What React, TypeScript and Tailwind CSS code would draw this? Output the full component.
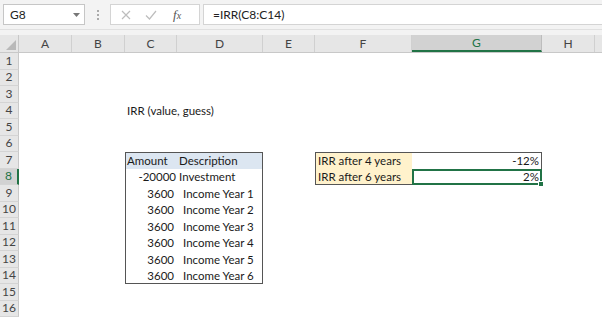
import React from 'react'

type Col = { key: string; w: string }

const cols: Col[] = [
  { key: 'A', w: 'w-[53px]' },
  { key: 'B', w: 'w-[53px]' },
  { key: 'C', w: 'w-[52px]' },
  { key: 'D', w: 'w-[86px]' },
  { key: 'E', w: 'w-[52px]' },
  { key: 'F', w: 'w-[97px]' },
  { key: 'G', w: 'w-[130px]' },
  { key: 'H', w: 'w-[53px]' },
  { key: '', w: 'flex-1' },
]

const rows = Array.from({ length: 16 }, (_, i) => i + 1)

type Cell = { text?: string; cls?: string; selected?: boolean }

// cell contents and borders, keyed by "C7" style refs
const cells: Record<string, Cell> = {
  C4: { text: 'IRR (value, guess)', cls: 'pl-[2px] whitespace-nowrap overflow-visible' },
  C7: { text: 'Amount', cls: 'bg-[#dce6f1] border-l border-t border-[#555] pl-[1px]' },
  D7: { text: 'Description', cls: 'bg-[#dce6f1] border-r border-t border-[#555] pl-[2px]' },
  C8: { text: '-20000', cls: 'border-l border-[#555] justify-end pr-[1px]' },
  D8: { text: 'Investment', cls: 'border-r border-[#555] pl-[2px]' },
  F7: { text: 'IRR after 4 years', cls: 'bg-[#fff2cc] border-l border-t border-[#555] pl-[2px]' },
  G7: { text: '-12%', cls: 'border-r border-t border-[#555] justify-end pr-[2px]' },
  F8: { text: 'IRR after 6 years', cls: 'bg-[#fff2cc] border-l border-b border-[#555] pl-[2px]' },
  G8: { text: '2%', cls: 'border-2 border-[#217346] justify-end pr-[1px]', selected: true },
}
for (let r = 9; r <= 14; r++) {
  const last = r === 14 ? ' border-b' : ''
  cells['C' + r] = { text: '3600', cls: 'border-l border-[#555] justify-end pr-[3px]' + last }
  cells['D' + r] = { text: 'Income Year ' + (r - 8), cls: 'border-r border-[#555] pl-[6px]' + last }
}

function Toolbar() {
  return (
    <div className="h-[30px] bg-[#f3f3f3] border-b border-[#e0e0e0] flex items-center pl-[3px]">
      <div className="h-[21px] w-[82px] bg-white border border-[#c6c6c6] flex items-center justify-between pl-[6px] pr-[4px] text-[12px] text-[#222]">
        <span>G8</span>
        <svg width="7" height="4" viewBox="0 0 7 4"><path d="M0 0h7L3.5 4z" fill="#777" /></svg>
      </div>
      <div className="w-[25px] flex flex-col items-center gap-[2px]">
        <span className="w-[2px] h-[2px] bg-[#aaa]" />
        <span className="w-[2px] h-[2px] bg-[#aaa]" />
        <span className="w-[2px] h-[2px] bg-[#aaa]" />
      </div>
      <div className="h-[21px] w-[90px] bg-white border border-[#d4d4d4] flex items-center pl-[10px] gap-[14px]">
        <svg width="10" height="10" viewBox="0 0 10 10"><path d="M1 1l8 8M9 1l-8 8" stroke="#bdbdbd" strokeWidth="1.2" /></svg>
        <svg width="12" height="10" viewBox="0 0 12 10"><path d="M1 5.5l3.5 3.5L11 1" stroke="#bdbdbd" strokeWidth="1.2" fill="none" /></svg>
        <span className="ml-[2px] text-[13px] italic text-[#555] font-['Liberation_Serif',serif]">
          f<span className="text-[10px]">x</span>
        </span>
      </div>
      <div className="h-[21px] flex-1 ml-[3px] bg-white border border-[#d4d4d4] border-r-0 flex items-center pl-[9px] text-[12px] text-[#222]">
        =IRR(C8:C14)
      </div>
    </div>
  )
}

function ColumnHeaders() {
  return (
    <div className="h-[18px] flex bg-[#e6e6e6] border-b border-[#c8c8c8] text-[12px] text-[#444]">
      <div className="w-[19px] relative border-r border-[#c8c8c8]">
        <svg className="absolute right-[2px] bottom-[2px]" width="10" height="10" viewBox="0 0 10 10">
          <path d="M10 0v10H0z" fill="#b9b9b9" />
        </svg>
      </div>
      {cols.map((c) => {
        const sel = c.key === 'G'
        return (
          <div
            key={c.key || 'rest'}
            className={
              c.w +
              ' flex items-center justify-center ' +
              (sel
                ? 'bg-[#d2d2d2] text-[#217346] border-b-2 border-[#217346] border-r border-r-[#bdbdbd]'
                : c.key
                  ? 'border-r border-[#d0d0d0]'
                  : '')
            }
          >
            {c.key}
          </div>
        )
      })}
    </div>
  )
}

export default function App() {
  return (
    <div className="w-[602px] h-[317px] overflow-hidden bg-white font-['Lato',sans-serif]">
      <Toolbar />
      <div className="h-[5px] bg-[#f3f3f3]" />
      <ColumnHeaders />
      {rows.map((r) => (
        <div key={r} className="h-[16.5px] flex text-[11.5px] text-[#1a1a1a]">
          <div
            className={
              'w-[19px] shrink-0 flex items-center justify-center text-[12px] border-b border-[#d4d4d4] ' +
              (r === 8
                ? 'bg-[#d2d2d2] text-[#217346] border-r-2 border-r-[#217346]'
                : 'bg-[#e6e6e6] text-[#444] border-r border-r-[#c8c8c8]')
            }
          >
            {r}
          </div>
          {cols.map((c) => {
            const cell = cells[c.key + r]
            return (
              <div
                key={c.key || 'rest'}
                className={c.w + ' shrink-0 relative flex items-center box-border leading-none ' + (cell?.cls ?? '')}
              >
                <span className="whitespace-nowrap">{cell?.text}</span>
                {cell?.selected && (
                  <span className="absolute right-[-4px] bottom-[-4px] w-[6px] h-[6px] bg-[#217346] border border-white" />
                )}
              </div>
            )
          })}
        </div>
      ))}
    </div>
  )
}
